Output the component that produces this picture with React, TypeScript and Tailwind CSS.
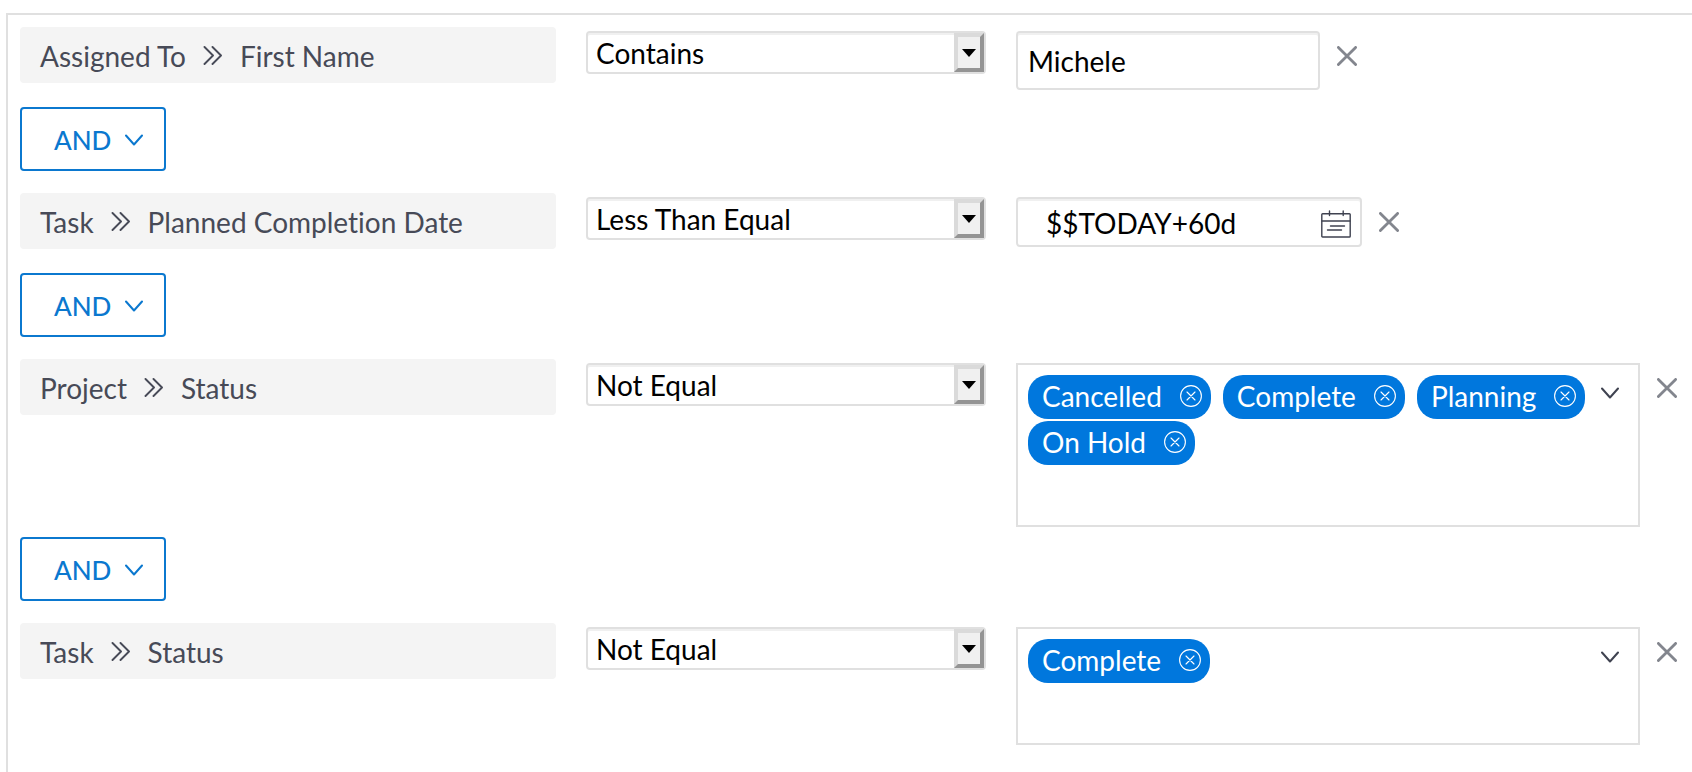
import { useState } from 'react';

type FilterValue =
  | { kind: 'text'; value: string }
  | { kind: 'date'; value: string }
  | { kind: 'tags'; value: string[]; tall?: boolean };

interface FilterRule {
  object: string;
  field: string;
  operator: string;
  filter: FilterValue;
}

const OPERATORS = ['Contains', 'Equal', 'Not Equal', 'Less Than Equal', 'Greater Than Equal'];

const RULES: FilterRule[] = [
  { object: 'Assigned To', field: 'First Name', operator: 'Contains', filter: { kind: 'text', value: 'Michele' } },
  { object: 'Task', field: 'Planned Completion Date', operator: 'Less Than Equal', filter: { kind: 'date', value: '$$TODAY+60d' } },
  {
    object: 'Project',
    field: 'Status',
    operator: 'Not Equal',
    filter: { kind: 'tags', value: ['Cancelled', 'Complete', 'Planning', 'On Hold'], tall: true },
  },
  { object: 'Task', field: 'Status', operator: 'Not Equal', filter: { kind: 'tags', value: ['Complete'] } },
];

function DoubleChevron() {
  return (
    <svg className="w-5 h-5 shrink-0" viewBox="0 0 20 20" fill="none" stroke="currentColor" strokeWidth="1.9" strokeLinecap="round" strokeLinejoin="round">
      <path d="M1.5 1l8.5 8.5L1.5 18M9.5 1L18 9.5 9.5 18" />
    </svg>
  );
}

function ChevronDown() {
  return (
    <svg className="w-[18px] h-3 shrink-0" viewBox="0 0 18 12" fill="none" stroke="currentColor" strokeWidth="2" strokeLinecap="round" strokeLinejoin="round">
      <path d="M1 1.5l8 9 8-9" />
    </svg>
  );
}

function CalendarIcon() {
  return (
    <svg className="w-[30px] h-7" viewBox="0 0 30 28" fill="none" stroke="currentColor" strokeWidth="1.4" strokeLinecap="round">
      <rect x="0.8" y="3.8" width="28.4" height="23.2" rx="0.8" />
      <path d="M1 11h28M8.5 1v4.5M22.2 1v4.5M9.5 16h14M6.5 20h14" />
    </svg>
  );
}

function RemoveButton({ label }: { label: string }) {
  return (
    <button type="button" aria-label={label} className="mt-[15px] shrink-0 text-[#83868e]">
      <svg className="w-5 h-5" viewBox="0 0 20 20" fill="none" stroke="currentColor" strokeWidth="2.8" strokeLinecap="round">
        <path d="M1.4 1.4l17.2 17.2M18.6 1.4L1.4 18.6" />
      </svg>
    </button>
  );
}

function OperatorSelect({ label, value }: { label: string; value: string }) {
  return (
    <div className="relative mt-1 h-[43px]">
      <select
        aria-label={label}
        defaultValue={value}
        className="w-full h-full appearance-none rounded border-2 border-[#e0e0e0] bg-white pl-2 pr-9 leading-8 text-black shadow-[inset_0_2px_0_#f0f0f0] outline-none"
      >
        {OPERATORS.map((operator) => (
          <option key={operator}>{operator}</option>
        ))}
      </select>
      <span className="pointer-events-none absolute right-0.5 inset-y-0.5 w-[30px] flex items-center justify-center border-4 border-t-[#dadada] border-l-[#dadada] border-r-[#949494] border-b-[#949494] bg-[#f0f0f0]">
        <svg className="w-3.5 h-2" viewBox="0 0 14 8">
          <path d="M0 0h14L7 8z" fill="black" />
        </svg>
      </span>
    </div>
  );
}

function Tag({ name, onRemove }: { name: string; onRemove: () => void }) {
  return (
    <span className="flex items-center h-11 gap-[18px] pl-3.5 pr-[9px] pb-0.5 rounded-[20px] bg-[#0077dd] text-white">
      {name}
      <button type="button" aria-label={`Remove ${name}`} onClick={onRemove}>
        <svg className="w-[22px] h-[22px]" viewBox="0 0 22 22" fill="none" stroke="currentColor" strokeWidth="1.1" strokeLinecap="round">
          <circle cx="11" cy="11" r="10.4" />
          <path d="M7 7l8 8M15 7l-8 8" />
        </svg>
      </button>
    </span>
  );
}

function TagBox({ label, initial, tall }: { label: string; initial: string[]; tall?: boolean }) {
  const [tags, setTags] = useState(initial);

  return (
    <div className={`flex-1 min-w-0 flex items-start border-2 border-[#e0e0e0] pl-2.5 pr-[19px] pt-2.5 ${tall ? 'min-h-[164px]' : 'min-h-[118px]'}`}>
      <div className="flex-1 min-w-0 flex flex-wrap gap-x-3 gap-y-0.5">
        {tags.map((tag) => (
          <Tag key={tag} name={tag} onRemove={() => setTags(tags.filter((t) => t !== tag))} />
        ))}
      </div>
      <button type="button" aria-label={`${label} options`} className="mt-3 shrink-0 text-[#3f4250]">
        <ChevronDown />
      </button>
    </div>
  );
}

function ValueField({ label, filter }: { label: string; filter: FilterValue }) {
  if (filter.kind === 'tags') {
    return <TagBox label={label} initial={filter.value} tall={filter.tall} />;
  }

  if (filter.kind === 'date') {
    return (
      <div className="flex items-center w-[346px] h-[50px] rounded border-2 border-[#e0e0e0] bg-white pt-0.5 pl-7 pr-[9px] shadow-[inset_0_2px_0_#f0f0f0]">
        <input aria-label={label} defaultValue={filter.value} className="flex-1 min-w-0 text-black outline-none" />
        <button type="button" aria-label="Open calendar" className="mt-0.5 text-[#3f4250]">
          <CalendarIcon />
        </button>
      </div>
    );
  }

  return (
    <input
      aria-label={label}
      defaultValue={filter.value}
      className="w-[304px] h-[59px] rounded border-2 border-[#e0e0e0] bg-white px-2.5 text-black shadow-[inset_0_2px_0_#f0f0f0] outline-none"
    />
  );
}

function RuleRow({ rule }: { rule: FilterRule }) {
  const name = `${rule.object} ${rule.field}`;

  return (
    <div className="grid grid-cols-[536fr_400fr_676fr] gap-x-[30px] items-start min-h-20">
      <div className="flex items-center h-14 gap-[17px] rounded px-5 pt-0.5 bg-[#f4f4f4] text-[#474a57] whitespace-nowrap">
        <span>{rule.object}</span>
        <DoubleChevron />
        <span>{rule.field}</span>
      </div>
      <OperatorSelect label={`${name} operator`} value={rule.operator} />
      <div className="flex items-start gap-[17px] pt-1 pb-2.5 pr-[15px]">
        <ValueField label={`${name} value`} filter={rule.filter} />
        <RemoveButton label={`Remove ${name} rule`} />
      </div>
    </div>
  );
}

export default function App() {
  return (
    <main className="flex flex-col min-h-screen pt-[13px] pl-1.5 bg-white font-[Lato,sans-serif] text-[28px] leading-8 [font-variant-ligatures:none]">
      <div className="flex-1 border-t-2 border-l-2 border-[#e0e0e0] pt-3 pl-3">
        {RULES.map((rule, i) => (
          <div key={i}>
            {i > 0 && (
              <button
                type="button"
                className="flex items-center justify-between w-[146px] h-16 mb-[22px] rounded border-2 border-[#0b78cf] pt-0.5 pl-8 pr-[21px] text-[26px] font-medium text-[#0b78cf]"
              >
                AND
                <ChevronDown />
              </button>
            )}
            <RuleRow rule={rule} />
          </div>
        ))}
      </div>
    </main>
  );
}
